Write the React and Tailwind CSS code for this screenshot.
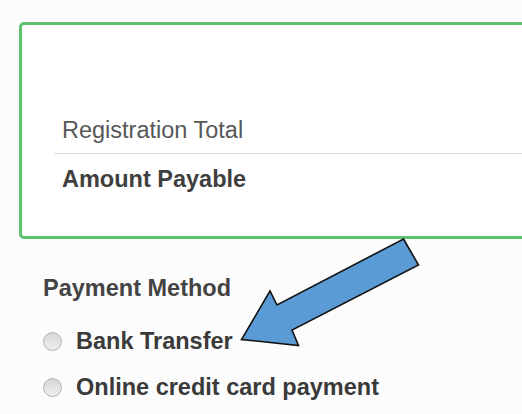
import React from 'react';

const font = { fontFamily: '"Liberation Sans", Arial, sans-serif' };

const methods = ['Bank Transfer', 'Online credit card payment'];

// Blue callout arrow laid over the form, coordinates in page pixels
const Arrow = () => (
  <svg className="absolute left-0 top-0 pointer-events-none" width="522" height="414" viewBox="0 0 522 414">
    <polygon
      points="403.5,239 418.5,265 292,330 298.5,345.5 241.5,339.5 270,291 277,305"
      fill="#5b9bd5"
      stroke="#111"
      strokeWidth="1.6"
      strokeLinejoin="miter"
    />
  </svg>
);

const Radio = () => (
  <span className="w-[19px] h-[19px] shrink-0 rounded-full border border-[#b4b4b4] bg-linear-to-b from-[#d6d6d6] to-[#efefef]" />
);

export default function App() {
  return (
    <div style={font} className="relative w-[522px] h-[414px] overflow-hidden bg-[#fcfcfc] text-[23.5px]">
      {/* Totals box */}
      <div className="ml-[19px] mt-[22px] w-[540px] h-[217px] border-[3px] border-[#5cc26f] rounded-[5px] bg-white">
        <div className="pt-[92px] pl-[32px]">
          <div className="pl-[8px] pb-[10px] leading-[26px] text-[#575757] border-b border-[#dcdcdc]">
            Registration Total
          </div>
          <div className="pl-[8px] pt-[12px] leading-[26px] font-bold text-[#3f3f3f]">
            Amount Payable
          </div>
        </div>
      </div>

      {/* Payment method */}
      <div className="pl-[43px] pt-[36px]">
        <div className="leading-[26px] font-bold text-[#444]">Payment Method</div>
        <div className="mt-[27px] flex flex-col gap-[20px]">
          {methods.map(m => (
            <label key={m} className="flex items-center gap-[14px] leading-[26px] font-bold text-[#3a3a3a]">
              <Radio />
              <span>{m}</span>
            </label>
          ))}
        </div>
      </div>

      <Arrow />
    </div>
  );
}
